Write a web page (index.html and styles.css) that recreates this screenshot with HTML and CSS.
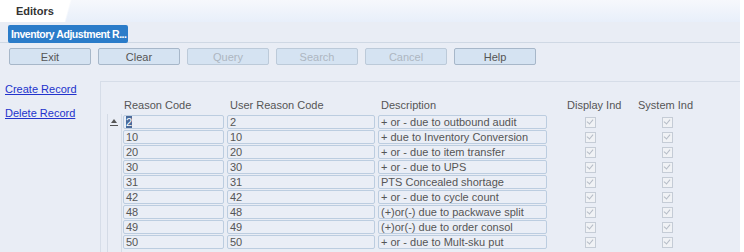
FILE: index.html
```html
<!DOCTYPE html>
<html lang="en">
<head>
    <meta charset="UTF-8">
    <title>Editors - Inventory Adjustment Reasons</title>
    <link rel="stylesheet" href="styles.css">
</head>
<body>
    <div class="page">
        <div class="tabbar">
            <div class="tab">Editors</div>
        </div>
        <div class="titlebar">
            <span class="title-btn">Inventory Adjustment R...</span>
        </div>
        <div class="toolbar">
            <button class="tool">Exit</button>
            <button class="tool">Clear</button>
            <button class="tool" disabled>Query</button>
            <button class="tool" disabled>Search</button>
            <button class="tool" disabled>Cancel</button>
            <button class="tool">Help</button>
        </div>
        <div class="main">
            <div class="sidebar">
                <a href="#">Create Record</a>
                <a href="#">Delete Record</a>
            </div>
            <div class="panel">
                <div class="scroll">
                    <span class="arrow"></span>
                </div>
                <div class="grid">
                    <div class="row head">
                        <span class="c-code">Reason Code</span>
                        <span class="c-user">User Reason Code</span>
                        <span class="c-desc">Description</span>
                        <span class="c-chk">Display Ind</span>
                        <span class="c-chk">System Ind</span>
                    </div>
                    <div class="row">
                        <span class="field c-code"><span class="sel">2</span></span>
                        <span class="field c-user">2</span>
                        <span class="field c-desc">+ or - due to outbound audit</span>
                        <span class="c-chk"><span class="box"></span></span>
                        <span class="c-chk"><span class="box"></span></span>
                    </div>
                    <div class="row">
                        <span class="field c-code">10</span>
                        <span class="field c-user">10</span>
                        <span class="field c-desc">+ due to Inventory Conversion</span>
                        <span class="c-chk"><span class="box"></span></span>
                        <span class="c-chk"><span class="box"></span></span>
                    </div>
                    <div class="row">
                        <span class="field c-code">20</span>
                        <span class="field c-user">20</span>
                        <span class="field c-desc">+ or - due to item transfer</span>
                        <span class="c-chk"><span class="box"></span></span>
                        <span class="c-chk"><span class="box"></span></span>
                    </div>
                    <div class="row">
                        <span class="field c-code">30</span>
                        <span class="field c-user">30</span>
                        <span class="field c-desc">+ or - due to UPS</span>
                        <span class="c-chk"><span class="box"></span></span>
                        <span class="c-chk"><span class="box"></span></span>
                    </div>
                    <div class="row">
                        <span class="field c-code">31</span>
                        <span class="field c-user">31</span>
                        <span class="field c-desc">PTS Concealed shortage</span>
                        <span class="c-chk"><span class="box"></span></span>
                        <span class="c-chk"><span class="box"></span></span>
                    </div>
                    <div class="row">
                        <span class="field c-code">42</span>
                        <span class="field c-user">42</span>
                        <span class="field c-desc">+ or - due to cycle count</span>
                        <span class="c-chk"><span class="box"></span></span>
                        <span class="c-chk"><span class="box"></span></span>
                    </div>
                    <div class="row">
                        <span class="field c-code">48</span>
                        <span class="field c-user">48</span>
                        <span class="field c-desc">(+)or(-) due to packwave split</span>
                        <span class="c-chk"><span class="box"></span></span>
                        <span class="c-chk"><span class="box"></span></span>
                    </div>
                    <div class="row">
                        <span class="field c-code">49</span>
                        <span class="field c-user">49</span>
                        <span class="field c-desc">(+)or(-) due to order consol</span>
                        <span class="c-chk"><span class="box"></span></span>
                        <span class="c-chk"><span class="box"></span></span>
                    </div>
                    <div class="row">
                        <span class="field c-code">50</span>
                        <span class="field c-user">50</span>
                        <span class="field c-desc">+ or - due to Mult-sku put</span>
                        <span class="c-chk"><span class="box"></span></span>
                        <span class="c-chk"><span class="box"></span></span>
                    </div>
                </div>
            </div>
        </div>
    </div>
</body>
</html>
```

FILE: styles.css
```css
body {
    margin: 0;
    background: #ffffff;
    font-family: 'Liberation Sans', Arial, sans-serif;
    font-size: 11px;
    color: #555;
    overflow: hidden;
}

.page {
    width: 740px;
    height: 252px;
    background: #e9edf5;
}

.tabbar {
    height: 22px;
    background: linear-gradient(#f6f8fc, #e8effa);
}

.tab {
    display: inline-block;
    height: 22px;
    line-height: 22px;
    padding: 0 30px 0 16px;
    background: linear-gradient(105deg, #ffffff 78%, transparent 80%);
    font-weight: bold;
    color: #333;
    font-size: 11px;
}

.titlebar {
    height: 21px;
    padding: 3px 0 0 8px;
    box-sizing: border-box;
    background: #e9edf5;
    border-bottom: 1px solid #cfd8e4;
}

.title-btn {
    display: inline-block;
    width: 120px;
    height: 18px;
    line-height: 18px;
    padding-left: 3px;
    box-sizing: border-box;
    background: #2b7cc9;
    color: #ffffff;
    font-weight: bold;
    font-size: 10.5px;
    letter-spacing: -0.45px;
    border-radius: 2px;
    white-space: nowrap;
    overflow: hidden;
}

.toolbar {
    display: flex;
    gap: 7px;
    padding: 5px 0 0 9px;
}

.tool {
    width: 82px;
    height: 17px;
    padding: 0;
    font-family: 'Liberation Sans', Arial, sans-serif;
    font-size: 11px;
    color: #555;
    background: #d5e3f2;
    border: 1px solid #a7b7c9;
    border-radius: 2px;
}

.tool:disabled {
    color: #adb6c1;
    border-color: #bccad9;
}

.main {
    display: flex;
    padding-top: 16px;
}

.sidebar {
    width: 100px;
    display: flex;
    flex-direction: column;
    gap: 11px;
    padding: 2px 0 0 5px;
    box-sizing: border-box;
}

.sidebar a {
    color: #2233cc;
    font-size: 11px;
    line-height: 13px;
}

.panel {
    flex: 1;
    height: 180px;
    border: 1px solid #d6dde8;
    border-right: none;
    display: flex;
    padding: 32px 0 0 6px;
    box-sizing: border-box;
}

.scroll {
    width: 13px;
    border: 1px solid #d4dbe6;
    border-top: none;
    margin-right: 1px;
    position: relative;
}

.arrow {
    position: absolute;
    left: 3px;
    top: 5px;
    width: 0;
    height: 0;
    border-left: 3px solid transparent;
    border-right: 3px solid transparent;
    border-bottom: 4px solid #555;
}

.arrow::after {
    content: '';
    position: absolute;
    left: -4px;
    top: 6px;
    width: 8px;
    height: 1px;
    background: #555;
}

.grid {
    margin-top: -18px;
}

.row {
    display: flex;
    height: 15px;
    align-items: center;
}

.row.head {
    height: 18px;
}

.c-code {
    width: 101px;
    margin-right: 3px;
}

.c-user {
    width: 148px;
    margin-right: 3px;
}

.c-desc {
    width: 169px;
    margin-right: 5px;
}

.c-chk {
    width: 77px;
    box-sizing: border-box;
    text-align: center;
    white-space: nowrap;
}

.head .c-code {
    padding-left: 1px;
}

.head .c-user {
    padding-left: 2px;
}

.head .c-chk {
    text-align: left;
    padding-left: 6px;
}

.head .c-desc + .c-chk {
    padding-left: 12px;
}

.field {
    line-height: 12px;
    border: 1px solid #bccde0;
    border-radius: 2px;
    padding-left: 2px;
    box-sizing: border-box;
    height: 14px;
    background: #eaeef6;
    white-space: nowrap;
    overflow: hidden;
}

.sel {
    background: #4a6a9a;
    color: #ffffff;
}

.box {
    display: inline-block;
    width: 9px;
    height: 9px;
    border: 1px solid #c5ccd6;
    background: #f0f2f5;
    position: relative;
    vertical-align: middle;
}

.box::after {
    content: '';
    position: absolute;
    left: 2px;
    top: 0;
    width: 3px;
    height: 5px;
    border: solid #b5bcc6;
    border-width: 0 1px 1px 0;
    transform: rotate(40deg);
}
```
